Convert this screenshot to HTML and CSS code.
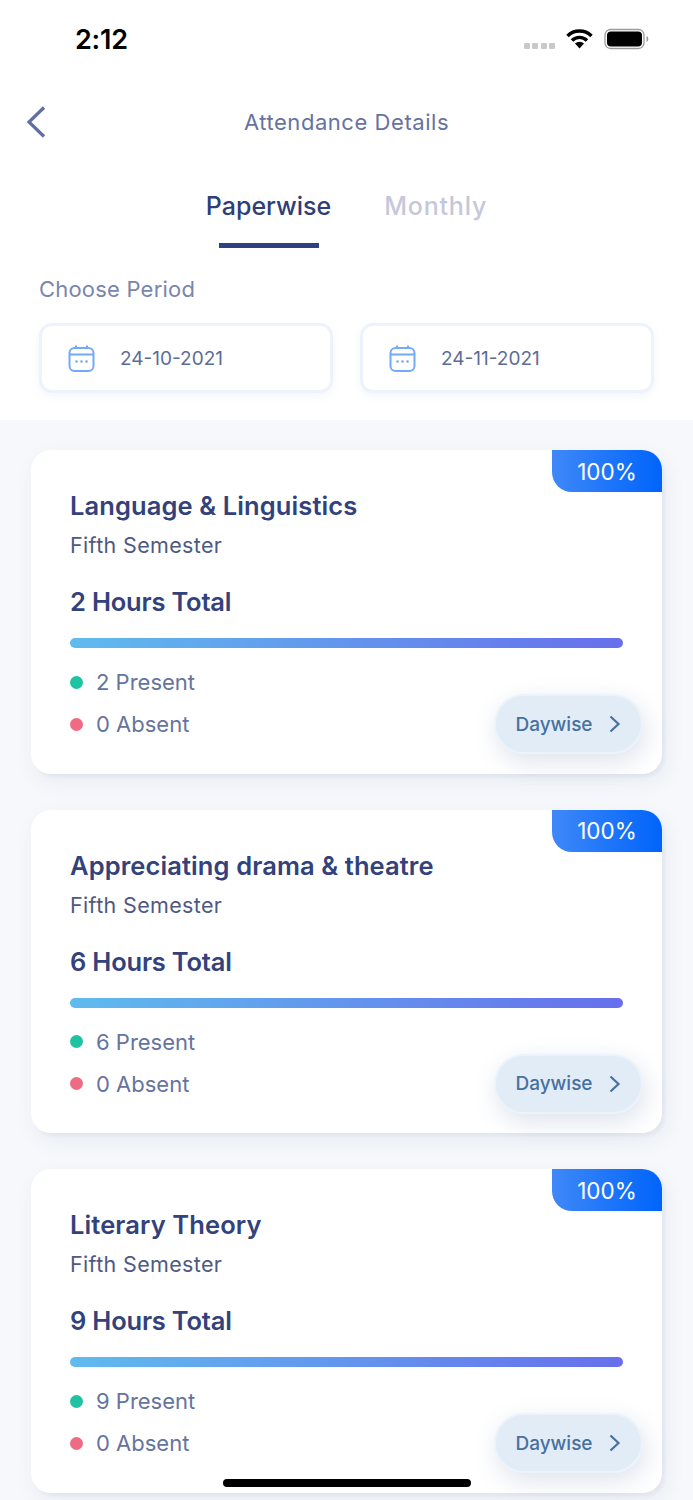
FILE: index.html
```html
<!DOCTYPE html>
<html lang="en">
<head>
<meta charset="utf-8">
<title>Attendance Details</title>
<link rel="stylesheet" href="styles.css">
</head>
<body>
<div class="screen">
  <header class="top">
    <div class="status">
      <span class="time">2:12</span>
      <div class="status-icons">
        <span class="signal"><i></i><i></i><i></i><i></i></span>
        <svg class="wifi" width="27" height="21" viewBox="0 0 27 21"><path d="M1.500 8a17 17 0 0 1 24 0" fill="none" stroke="#000" stroke-width="3.400"/><path d="M6 12.500a10.500 10.500 0 0 1 15 0" fill="none" stroke="#000" stroke-width="3.400"/><path d="M9 15.500a6.500 6.500 0 0 1 9 0L13.500 20.500z" fill="#000"/></svg>
        <svg class="battery" width="46" height="22" viewBox="0 0 46 22"><rect x="1" y="1.500" width="39" height="19" rx="5.500" fill="none" stroke="#9a9a9a" stroke-width="1.300"/><rect x="3" y="3.500" width="35" height="15" rx="4" fill="#000"/><path d="M42.500 8v6c1.200-.4 1.800-1.600 1.800-3s-.6-2.600-1.800-3z" fill="#9a9a9a"/></svg>
      </div>
    </div>
    <div class="nav">
      <svg class="back" width="24" height="34" viewBox="0 0 24 34"><path d="M20 2.500 5 17l15 14.500" fill="none" stroke="#5f6f9f" stroke-width="3.200"/></svg>
      <h1 class="title">Attendance Details</h1>
    </div>
    <div class="tabs">
      <div class="tab active">Paperwise<span class="underline"></span></div>
      <div class="tab">Monthly</div>
    </div>
    <p class="period-label">Choose Period</p>
    <div class="dates">
      <div class="date">
        <svg class="cal" width="28" height="28" viewBox="0 0 28 28"><rect x="2.500" y="4" width="24" height="23" rx="5" fill="none" stroke="#74a9f8" stroke-width="2"/><path d="M3 10.500h23M9 1.500V5M20 1.500V5" stroke="#74a9f8" stroke-width="2" fill="none"/><circle cx="9.500" cy="17.500" r="1.300" fill="#74a9f8"/><circle cx="14.500" cy="17.500" r="1.300" fill="#74a9f8"/><circle cx="19.500" cy="17.500" r="1.300" fill="#74a9f8"/></svg>
        <span>24-10-2021</span>
      </div>
      <div class="date">
        <svg class="cal" width="28" height="28" viewBox="0 0 28 28"><rect x="2.500" y="4" width="24" height="23" rx="5" fill="none" stroke="#74a9f8" stroke-width="2"/><path d="M3 10.500h23M9 1.500V5M20 1.500V5" stroke="#74a9f8" stroke-width="2" fill="none"/><circle cx="9.500" cy="17.500" r="1.300" fill="#74a9f8"/><circle cx="14.500" cy="17.500" r="1.300" fill="#74a9f8"/><circle cx="19.500" cy="17.500" r="1.300" fill="#74a9f8"/></svg>
        <span>24-11-2021</span>
      </div>
    </div>
  </header>
  <main class="list">
    <article class="card">
      <span class="badge">100%</span>
      <h2 class="paper">Language &amp; Linguistics</h2>
      <p class="sem">Fifth Semester</p>
      <h3 class="hours">2 Hours Total</h3>
      <div class="bar"></div>
      <div class="foot">
        <div class="legend">
          <div class="row"><i class="dot green"></i>2 Present</div>
          <div class="row"><i class="dot red"></i>0 Absent</div>
        </div>
        <button class="day">Daywise<svg width="14" height="20" viewBox="0 0 14 20"><path d="M2.500 2.500 10.500 10l-8 7.500" fill="none" stroke="#47709f" stroke-width="2.200"/></svg></button>
      </div>
    </article>
    <article class="card">
      <span class="badge">100%</span>
      <h2 class="paper">Appreciating drama &amp; theatre</h2>
      <p class="sem">Fifth Semester</p>
      <h3 class="hours">6 Hours Total</h3>
      <div class="bar"></div>
      <div class="foot">
        <div class="legend">
          <div class="row"><i class="dot green"></i>6 Present</div>
          <div class="row"><i class="dot red"></i>0 Absent</div>
        </div>
        <button class="day">Daywise<svg width="14" height="20" viewBox="0 0 14 20"><path d="M2.500 2.500 10.500 10l-8 7.500" fill="none" stroke="#47709f" stroke-width="2.200"/></svg></button>
      </div>
    </article>
    <article class="card">
      <span class="badge">100%</span>
      <h2 class="paper">Literary Theory</h2>
      <p class="sem">Fifth Semester</p>
      <h3 class="hours">9 Hours Total</h3>
      <div class="bar"></div>
      <div class="foot">
        <div class="legend">
          <div class="row"><i class="dot green"></i>9 Present</div>
          <div class="row"><i class="dot red"></i>0 Absent</div>
        </div>
        <button class="day">Daywise<svg width="14" height="20" viewBox="0 0 14 20"><path d="M2.500 2.500 10.500 10l-8 7.500" fill="none" stroke="#47709f" stroke-width="2.200"/></svg></button>
      </div>
    </article>
  </main>
  <div class="home"></div>
</div>
</body>
</html>
```

FILE: styles.css
```css
* { box-sizing: border-box; }
html, body { margin: 0; padding: 0; }
body { font-family: "Inter", "Liberation Sans", sans-serif; background: #f6f8fb; }
h1, h2, h3, p { margin: 0; font-weight: inherit; }
.screen { position: relative; width: 693px; height: 1500px; overflow: hidden; background: #f6f8fb; }

.top { height: 420px; background: #fff; }
.status { height: 78px; display: flex; justify-content: space-between; align-items: center; padding: 0 43px 0 75px; }
.time { font-size: 27px; font-weight: 600; color: #000; letter-spacing: -0.2px; }
.status-icons { display: flex; align-items: center; gap: 11px; }
.signal { display: flex; gap: 2.300px; margin-top: 13px; }
.signal i { width: 6px; height: 6px; border-radius: 1px; background: #c9c9c9; }
.wifi, .battery { display: block; }
.wifi { margin-top: -2px; }

.nav { position: relative; height: 88px; display: flex; align-items: center; justify-content: center; }
.back { position: absolute; left: 24px; top: 27px; }
.title { font-size: 22px; font-weight: 400; color: #6673a1; letter-spacing: 0.55px; }

.tabs { display: flex; justify-content: center; gap: 53px; height: 106px; padding-top: 22px; }
.tab { position: relative; font-size: 25px; font-weight: 500; color: #c6c7da; line-height: 36px; letter-spacing: 0.8px; }
.tab.active { color: #2f3e78; letter-spacing: 0; }
.underline { position: absolute; left: 13px; right: 12px; top: 55px; height: 5px; background: #2f4280; }

.period-label { font-size: 22px; color: #7a86ab; line-height: 30px; margin-left: 39px; margin-top: 2px; letter-spacing: 0.2px; }
.dates { display: grid; grid-template-columns: 294px 294px; gap: 27px; padding-left: 39px; margin-top: 19px; }
.date { height: 70px; display: flex; align-items: center; gap: 25px; padding-left: 25px; background: #fff; border: 3px solid #eef3fb; border-radius: 13px; box-shadow: 0 3px 8px rgba(100, 130, 190, 0.08); font-size: 19px; color: #5d6c96; }
.cal { display: block; }

.list { display: flex; flex-direction: column; gap: 36px; padding: 30px 31px 0; }
.card { position: relative; flex: none; width: 631px; height: 323.500px; padding: 40px 39px 0; background: #fff; border-radius: 20px; box-shadow: 3px 3px 3px rgba(70, 90, 130, 0.05), 4px 8px 20px rgba(70, 90, 130, 0.08); }
.badge { position: absolute; top: 0; right: 0; width: 110px; height: 42px; display: flex; align-items: center; justify-content: center; font-size: 22.500px; color: #fff; background: linear-gradient(90deg, #3f88f8, #0064fb); border-radius: 0 20px 0 20px; }
.paper { font-size: 25.500px; font-weight: 600; color: #33427b; line-height: 34px; letter-spacing: 0.1px; margin-top: -1px; }
.sem { font-size: 21.500px; color: #4e5a82; line-height: 30px; margin-top: 7px; letter-spacing: 0.35px; }
.hours { font-size: 25.500px; font-weight: 600; color: #33427b; line-height: 34px; margin-top: 25px; letter-spacing: -0.2px; }
.bar { height: 10px; width: 553px; margin-top: 19px; border-radius: 5px; background: linear-gradient(90deg, #5fbbee, #676fec); }
.foot { position: relative; margin-top: 19px; }
.legend { display: flex; flex-direction: column; gap: 12px; }
.row { display: flex; align-items: center; gap: 13px; font-size: 22px; color: #66739e; line-height: 30px; }
.dot { width: 13px; height: 13px; border-radius: 50%; }
.green { background: #20c2a4; }
.red { background: #ee6b83; }
.day { position: absolute; right: -20px; top: 27px; width: 149px; height: 60px; display: flex; align-items: center; justify-content: center; gap: 15px; padding: 0; font-family: inherit; font-size: 19px; font-weight: 500; color: #47709f; background: #e2ecf7; border: 2px solid #edf3fa; border-radius: 30px; box-shadow: 3px 8px 24px rgba(70, 100, 150, 0.18); }
.day svg { display: block; }

.home { position: absolute; left: 223px; bottom: 13px; width: 248px; height: 8px; background: #000; border-radius: 4px; }
```
